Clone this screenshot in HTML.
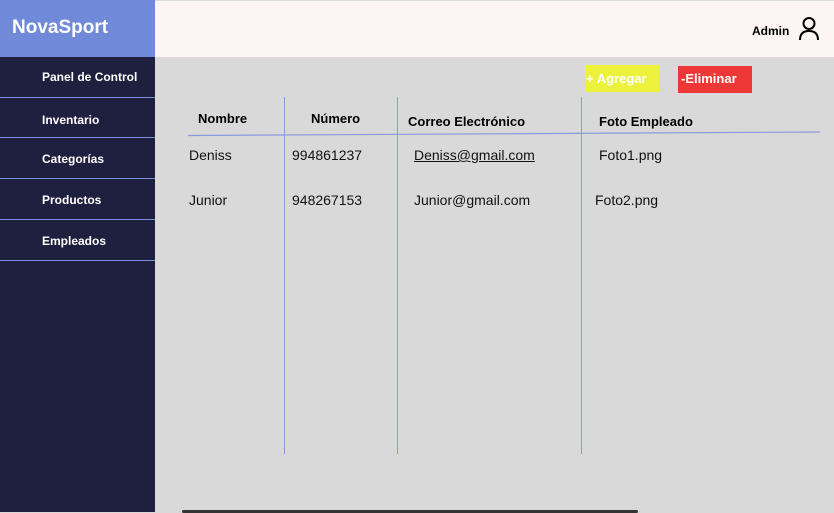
<!DOCTYPE html>
<html><head><meta charset="utf-8"><style>
*{margin:0;padding:0;box-sizing:border-box}
body{width:834px;height:512px;overflow:hidden;position:relative;background:#d9d9d9;font-family:"Liberation Sans",sans-serif}
.a{position:absolute}
.side{left:0;top:57px;width:155px;height:455px;background:#1f1f3f}
.logo{left:0;top:0;width:155px;height:57px;background:#7189d9;color:#fff;font-weight:bold;font-size:19px;padding:17px 0 0 12px}
.top{left:155px;top:0;width:679px;height:57px;background:#fdf5f3;border-top:1px solid #ddd}
.nav{left:0;width:155px;height:41px;border-bottom:1px solid #7b90dc;color:#fff;font-weight:bold;font-size:12px;padding-left:42px}
.h{font-weight:bold;font-size:13px;color:#000}
.t{font-size:14px;color:#111}
.v{width:1px;background:#8a9bdc;top:97px;height:357px}
</style></head><body>
<div class="a logo">NovaSport</div>
<div class="a top"></div>
<div class="a" style="left:752px;top:24px;font-weight:bold;font-size:12px">Admin</div>
<svg class="a" style="left:797px;top:16px" width="24" height="26" viewBox="0 0 24 26"><circle cx="12" cy="7.5" r="5.5" fill="none" stroke="#000" stroke-width="2"/><path d="M3 24 Q3 15 12 15 Q21 15 21 24" fill="none" stroke="#000" stroke-width="2"/></svg>
<div class="a side"></div>
<div class="a nav" style="top:57px;padding-top:13px">Panel de Control</div>
<div class="a nav" style="top:98px;padding-top:15px;height:40px">Inventario</div>
<div class="a nav" style="top:138px;padding-top:14px">Categorías</div>
<div class="a nav" style="top:179px;padding-top:14px">Productos</div>
<div class="a nav" style="top:220px;padding-top:14px">Empleados</div>
<div class="a" style="left:585px;top:65px;width:74px;height:27px;background:#ecf23c;color:#fff;font-weight:bold;font-size:13px;padding:6px 0 0 1px">+ Agregar</div>
<div class="a" style="left:678px;top:66px;width:74px;height:27px;background:#ee3838;color:#fff;font-weight:bold;font-size:13px;padding:5px 0 0 3px">-Eliminar</div>
<div class="a v" style="left:284px"></div>
<div class="a v" style="left:397px"></div>
<div class="a v" style="left:581px"></div>
<svg class="a" style="left:188px;top:130px" width="640" height="8"><line x1="0" y1="5.5" x2="632" y2="2" stroke="#8a9bdc" stroke-width="1.2"/></svg>
<div class="a h" style="left:198px;top:111px">Nombre</div>
<div class="a h" style="left:311px;top:111px">Número</div>
<div class="a h" style="left:408px;top:114px">Correo Electrónico</div>
<div class="a h" style="left:599px;top:114px">Foto Empleado</div>
<div class="a t" style="left:189px;top:147px">Deniss</div>
<div class="a t" style="left:292px;top:147px">994861237</div>
<div class="a t" style="left:414px;top:147px;text-decoration:underline">Deniss@gmail.com</div>
<div class="a t" style="left:599px;top:147px">Foto1.png</div>
<div class="a t" style="left:189px;top:192px">Junior</div>
<div class="a t" style="left:292px;top:192px">948267153</div>
<div class="a t" style="left:414px;top:192px">Junior@gmail.com</div>
<div class="a t" style="left:595px;top:192px">Foto2.png</div>
<div class="a" style="left:182px;top:510px;width:456px;height:3px;background:#333;border-radius:2px"></div>
</body></html>
